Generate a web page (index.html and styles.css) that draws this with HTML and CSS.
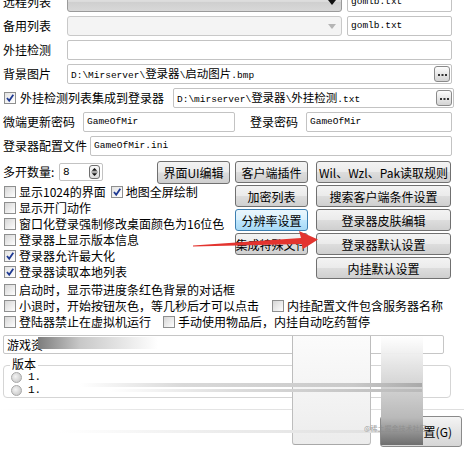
FILE: index.html
```html
<!DOCTYPE html>
<html>
<head>
<meta charset="utf-8">
<link rel="stylesheet" href="styles.css">
</head>
<body>
<div class="win">
  <div class="top">
    <div class="row">
      <span class="lbl w64">远程列表</span>
      <div class="combo c-dark"><svg class="arr" width="8" height="5" viewBox="0 0 8 5"><path d="M0 0H8L4 5Z" fill="#111"/></svg></div>
      <div class="field mono w105 ml5">gomlb.txt</div>
    </div>
    <div class="row">
      <span class="lbl w64">备用列表</span>
      <div class="combo c-light"><svg class="arr" width="8" height="5" viewBox="0 0 8 5"><path d="M0 0H8L4 5Z" fill="#b5b5b5"/></svg></div>
      <div class="field mono w105 ml5">gomlb.txt</div>
    </div>
    <div class="row">
      <span class="lbl w64">外挂检测</span>
      <div class="field w385"></div>
    </div>
    <div class="row">
      <span class="lbl w64">背景图片</span>
      <div class="field w385 mono split"><span>D:\Mirserver\<span class="cj">登录器</span>\<span class="cj">启动图片</span>.bmp</span><span class="dots"><svg width="9" height="3" viewBox="0 0 9 3"><rect x="0" y="0" width="2" height="2" fill="#333"/><rect x="3.5" y="0" width="2" height="2" fill="#333"/><rect x="7" y="0" width="2" height="2" fill="#333"/></svg></span></div>
    </div>
    <div class="row">
      <i class="box on"><svg width="10" height="10" viewBox="0 0 10 10"><path d="M2 5 L4.2 7.8 L8.3 1.8" stroke="#1f3a93" stroke-width="1.8" fill="none"/></svg></i>
      <span class="lbl w151">外挂检测列表集成到登录器</span>
      <div class="field w281 mono split"><span>D:\mirserver\<span class="cj">登录器</span>\<span class="cj">外挂检测</span>.txt</span><span class="dots"><svg width="9" height="3" viewBox="0 0 9 3"><rect x="0" y="0" width="2" height="2" fill="#333"/><rect x="3.5" y="0" width="2" height="2" fill="#333"/><rect x="7" y="0" width="2" height="2" fill="#333"/></svg></span></div>
    </div>
    <div class="row">
      <span class="lbl w80">微端更新密码</span>
      <div class="field w152 mono">GameOfMir</div>
      <span class="lbl lbl-pw">登录密码</span>
      <div class="field w146 mono">GameOfMir</div>
    </div>
    <div class="row">
      <span class="lbl w87">登录器配置文件</span>
      <div class="field w362 mono">GameOfMir.ini</div>
    </div>
  </div>

  <div class="mid">
    <div class="left">
      <div class="spinrow">
        <span class="lbl w56">多开数量:</span>
        <div class="spin"><span class="mono">8</span>
          <span class="spinbtn"><svg width="10" height="14" viewBox="0 0 10 14"><path d="M2 5.5H8L5 2.5Z" fill="#111"/><path d="M1.5 7H8.5" stroke="#555" stroke-width="1"/><path d="M2 8.5H8L5 11.5Z" fill="#111"/></svg></span>
        </div>
        <div class="btn b-ui">界面UI编辑</div>
      </div>
      <div class="cb"><i class="box"></i>显示1024的界面<i class="box on ml5"><svg width="10" height="10" viewBox="0 0 10 10"><path d="M2 5 L4.2 7.8 L8.3 1.8" stroke="#1f3a93" stroke-width="1.8" fill="none"/></svg></i>地图全屏绘制</div>
      <div class="cb"><i class="box"></i>显示开门动作</div>
      <div class="cb"><i class="box"></i>窗口化登录强制修改桌面颜色为16位色</div>
      <div class="cb"><i class="box"></i>登录器上显示版本信息</div>
      <div class="cb"><i class="box on"><svg width="10" height="10" viewBox="0 0 10 10"><path d="M2 5 L4.2 7.8 L8.3 1.8" stroke="#1f3a93" stroke-width="1.8" fill="none"/></svg></i>登录器允许最大化</div>
      <div class="cb"><i class="box on"><svg width="10" height="10" viewBox="0 0 10 10"><path d="M2 5 L4.2 7.8 L8.3 1.8" stroke="#1f3a93" stroke-width="1.8" fill="none"/></svg></i>登录器读取本地列表</div>
    </div>
    <div class="btns">
      <div class="btn">客户端插件</div>
      <div class="btn">Wil、Wzl、Pak读取规则</div>
      <div class="btn">加密列表</div>
      <div class="btn">搜索客户端条件设置</div>
      <div class="btn b-hot">分辨率设置</div>
      <div class="btn">登录器皮肤编辑</div>
      <div class="btn">集成特殊文件</div>
      <div class="btn">登录器默认设置</div>
      <div class="btn-empty"></div>
      <div class="btn">内挂默认设置</div>
    </div>
  </div>

  <div class="lower">
    <div class="cb"><i class="box"></i>启动时，显示带进度条红色背景的对话框</div>
    <div class="cb"><i class="box"></i>小退时，开始按钮灰色，等几秒后才可以点击<i class="box ml13"></i>内挂配置文件包含服务器名称</div>
    <div class="cb"><i class="box"></i>登陆器禁止在虚拟机运行<i class="box ml12"></i>手动使用物品后，内挂自动吃药暂停</div>
  </div>

  <div class="res">游戏资</div>

  <div class="group">
    <span class="legend">版本</span>
    <div class="radio"><i class="rad"></i>1.</div>
    <div class="radio"><i class="rad"></i>1.</div>
  </div>

  <div class="sep"></div>

  <div class="foot">
    <div class="btn b-foot">置(G)</div>
  </div>

  <svg class="arrow" width="464" height="449" viewBox="0 0 464 449">
    <path d="M193 245.5 L301 238 L299 231 L318 239.5 L303 249 L301.5 244 L193 246.5 Z" fill="#e3342f"/>
  </svg>
  <div class="smear s1"></div>
  <div class="smear s2"></div>
  <div class="smear s3"></div>
  <div class="smear s4"></div>
  <div class="smear s5"></div>
  <div class="smear s6"></div>
  <span class="wm">@稀土掘金技术社区</span>
</div>
</body>
</html>
```

FILE: styles.css
```css
* { box-sizing: border-box; }
html, body { margin: 0; padding: 0; background: #fff; }
body {
  font-family: "Noto Sans CJK SC", "DejaVu Sans", sans-serif;
  font-size: 12px;
  color: #000;
}
.win {
  position: relative;
  width: 464px;
  height: 449px;
  overflow: hidden;
  padding-left: 3px;
}
.top {
  margin-top: -8px;
  display: flex;
  flex-direction: column;
  gap: 4px;
}
.row {
  display: flex;
  align-items: center;
  height: 20px;
}
.lbl { white-space: nowrap; line-height: 20px; }
.w64 { width: 64px; }
.w80 { width: 80px; }
.w87 { width: 87px; }
.w56 { width: 56px; }
.w151 { width: 151px; }
.lbl-pw { margin-left: 15px; width: 56px; }

.combo {
  width: 275px;
  height: 20px;
  border-radius: 3px;
  position: relative;
}
.c-dark {
  border: 1px solid #9a9a9a;
  background: linear-gradient(#ececec, #dadada 50%, #cfcfcf 51%, #d8d8d8);
}
.c-light {
  border: 1px solid #c9c9c9;
  background: #f4f4f4;
}
.arr { position: absolute; right: 5px; top: 7px; }

.field {
  height: 20px;
  border: 1px solid #c3c3c3;
  border-radius: 2px;
  background: #fff;
  padding-left: 3px;
  line-height: 18px;
  white-space: nowrap;
  overflow: hidden;
}
.w105 { width: 105px; }
.w385 { width: 385px; }
.w281 { width: 281px; margin-left: 2px; }
.w152 { width: 152px; }
.w146 { width: 146px; }
.w362 { width: 362px; }
.mono {
  font-family: "Liberation Mono", "Noto Sans CJK SC", monospace;
  font-size: 9.5px;
}
.cj {
  font-family: "Noto Sans CJK SC", sans-serif;
  font-size: 11.5px;
}
.split {
  display: flex;
  justify-content: space-between;
  align-items: center;
  padding-right: 1px;
}
.dots {
  width: 16px;
  height: 16px;
  border: 1px solid #8a8a8a;
  border-radius: 3px;
  background: linear-gradient(#fdfdfd, #e6e6e6 55%, #d4d4d4);
  display: flex;
  align-items: flex-end;
  justify-content: center;
  padding-bottom: 4px;
}

.box {
  display: inline-flex;
  align-items: center;
  justify-content: center;
  width: 12px;
  height: 12px;
  border: 1px solid #8e8f8f;
  background: linear-gradient(135deg, #d6d6d6, #f2f2f2 70%, #fff);
  margin-left: 1px;
  margin-right: 3px;
  flex: none;
}
.box.on { background: linear-gradient(135deg, #e2e2e2, #f8f8f8 70%, #fff); }
.row .box { margin-right: 4px; }
.ml5 { margin-left: 5px; }
.box.ml5 { margin-left: 5px; }
.box.ml12 { margin-left: 12px; }
.box.ml13 { margin-left: 13px; }

.mid {
  display: flex;
  margin-top: 4px;
}
.left { width: 232px; }
.spinrow {
  display: flex;
  align-items: center;
  height: 24px;
}
.spin {
  width: 44px;
  height: 18px;
  border: 1px solid #c3c3c3;
  border-radius: 2px;
  display: flex;
  align-items: center;
  justify-content: space-between;
  padding: 0 1px 0 3px;
}
.spin .mono { font-size: 11px; }
.spinbtn {
  width: 11px;
  height: 14px;
  border: 1px solid #6f6f6f;
  border-radius: 3px;
  background: linear-gradient(#fafafa, #dcdcdc);
  display: flex;
  align-items: center;
  justify-content: center;
  margin-right: 1px;
}
.btn {
  height: 22px;
  border: 1px solid #707070;
  border-radius: 3px;
  background: linear-gradient(#f3f3f3, #ebebeb 48%, #dddddd 52%, #cfcfcf);
  display: flex;
  align-items: center;
  justify-content: center;
  white-space: nowrap;
  font-size: 12px;
}
.b-ui { width: 73px; margin-left: 54px; height: 23px; margin-top: 1px; }
.b-hot {
  border-color: #3c7fb1;
  background: linear-gradient(#eaf6fd, #d9f0fc 48%, #bee6fd 52%, #a7d9f5);
}
.btns {
  display: grid;
  grid-template-columns: 73px 135px;
  grid-auto-rows: 22px;
  column-gap: 8px;
  row-gap: 2px;
  margin-top: 1px;
}
.cb {
  display: flex;
  align-items: center;
  height: 16px;
  line-height: 16px;
  white-space: nowrap;
}
.lower { margin-top: 2px; }

.res {
  margin-top: 5px;
  width: 441px;
  height: 19px;
  border: 1px solid #c6c6c6;
  border-radius: 2px;
  padding-left: 3px;
  line-height: 17px;
}
.group {
  position: relative;
  margin-top: 11px;
  width: 448px;
  height: 33px;
  border: 1px solid #d5d5d5;
  border-radius: 4px;
  padding: 5px 0 0 7px;
}
.legend {
  position: absolute;
  left: 6px;
  top: -9px;
  background: #fff;
  padding: 0 2px;
  line-height: 14px;
}
.radio {
  display: flex;
  align-items: center;
  height: 12px;
  line-height: 12px;
  font-family: "Liberation Mono", monospace;
  font-size: 11px;
  margin-bottom: 1px;
}
.rad {
  width: 11px;
  height: 11px;
  border-radius: 50%;
  border: 1px solid #a8a8a8;
  background: radial-gradient(circle at 40% 40%, #f4f4f4, #cfcfcf 70%);
  margin-right: 6px;
}
.sep {
  margin-top: 11px;
  margin-left: -3px;
  height: 1px;
  width: 464px;
  background: linear-gradient(to right, #fff, #e6e6e6 30%, #dedede);
}
.foot {
  display: flex;
  justify-content: flex-end;
  margin-top: 6px;
  padding-right: 2px;
}
.b-foot {
  width: 82px;
  height: 31px;
  justify-content: flex-end;
  padding-right: 9px;
  border-color: #8a8a8a;
  background: linear-gradient(#f4f4f4, #e4e4e4 50%, #d6d6d6);
  font-size: 12px;
}

.arrow { position: absolute; left: 0; top: 0; pointer-events: none; }
.smear { position: absolute; pointer-events: none; }
.s1 {
  left: 38px; top: 337px; width: 120px; height: 12px;
  background: linear-gradient(to right, #7d7d7d, #c8c8c8 35%, rgba(255,255,255,0));
}
.s2 {
  left: 292px; top: 336px; width: 79px; height: 109px;
  border-left: 1px solid #bdbdbd;
  border-right: 1px solid #bdbdbd;
  border-bottom: 1px solid #a8a8a8;
  border-radius: 0 0 3px 3px;
  background: linear-gradient(#fbfbfb, #f1f1f1 70%, #ececec);
}
.s3 {
  left: 381px; top: 336px; width: 42px; height: 109px;
  background: linear-gradient(to bottom, rgba(255,255,255,0.9), #e2e2e2 30%, #b9b9b9 75%, #6e6e6e);
}
.s4 {
  left: 80px; top: 383px; width: 342px; height: 4px;
  background: linear-gradient(to right, rgba(220,220,220,0), #d9d9d9 30%, #c9c9c9 80%, #a9a9a9);
}
.s5 {
  left: 110px; top: 389px; width: 312px; height: 3px;
  background: linear-gradient(to right, rgba(230,230,230,0), #dcdcdc 40%, #b9b9b9);
}
.s6 {
  left: 60px; top: 430px; width: 320px; height: 3px;
  background: linear-gradient(to right, rgba(240,240,240,0), #ececec 50%, #e0e0e0);
}
.wm {
  position: absolute;
  left: 364px;
  top: 424px;
  font-size: 7px;
  line-height: 9px;
  color: rgba(140,140,140,0.85);
  white-space: nowrap;
  pointer-events: none;
}
```
